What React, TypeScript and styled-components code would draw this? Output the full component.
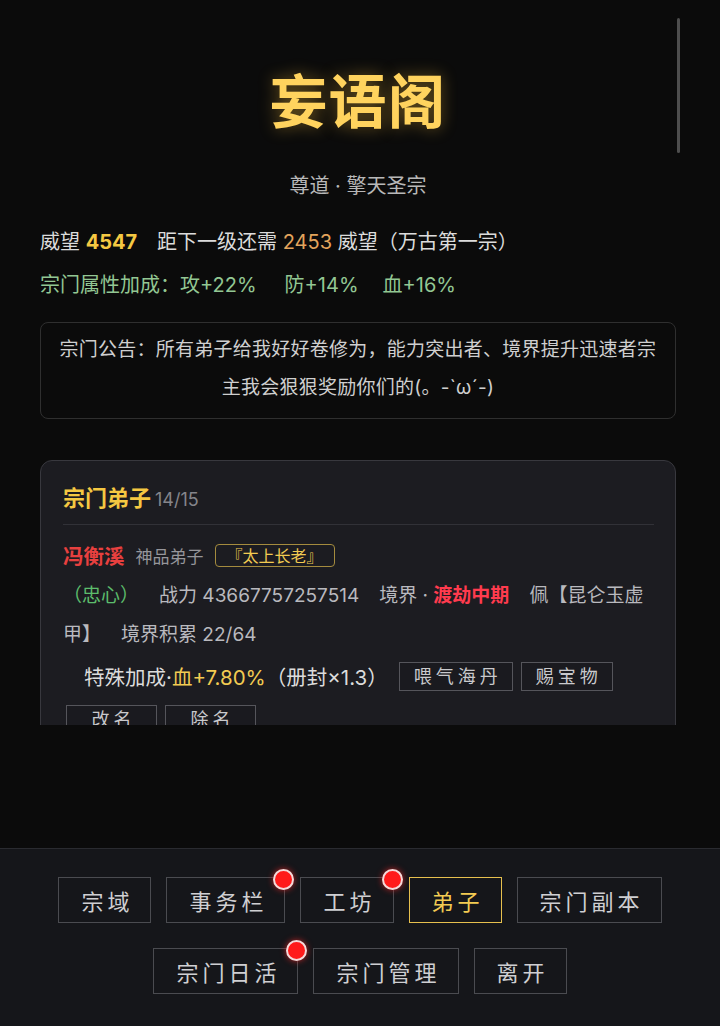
import styled, { createGlobalStyle } from "styled-components";

const GlobalStyle = createGlobalStyle`
  html, body {
    margin: 0;
    padding: 0;
    background: #0b0b0b;
  }
  body {
    font-family: Inter, "Noto Sans CJK SC", "Noto Sans", sans-serif;
    color: #d6d6d6;
  }
  * {
    box-sizing: border-box;
  }
`;

const Page = styled.div`
  display: flex;
  flex-direction: column;
  width: 720px;
  height: 1026px;
  background: #0b0b0b;
`;

const Main = styled.div`
  position: relative;
  height: 725px;
  overflow: hidden;
  padding: 63px 44px 0 40px;
`;

const ScrollThumb = styled.div`
  position: absolute;
  top: 18px;
  left: 677px;
  width: 3px;
  height: 135px;
  border-radius: 2px;
  background: #4e4e4e;
`;

const Title = styled.h1`
  margin: 0;
  text-align: center;
  font-family: "Noto Sans CJK SC", sans-serif;
  font-size: 58px;
  line-height: 70px;
  font-weight: 700;
  color: #ffd35e;
  letter-spacing: 1px;
  text-shadow: 0 0 16px rgba(255, 196, 60, 0.4);
`;

const Subtitle = styled.div`
  margin-top: 38px;
  text-align: center;
  font-size: 20px;
  line-height: 30px;
  color: #b8b8b8;
`;

const Stats = styled.div`
  margin-top: 20px;
`;

const StatLine = styled.div<{ $tone?: "green" }>`
  font-size: 20px;
  line-height: 43px;
  color: ${(p) => (p.$tone === "green" ? "#93c793" : "#dcdcdc")};
  white-space: nowrap;
`;

const Gap = styled.span<{ $w?: number }>`
  display: inline-block;
  width: ${(p) => p.$w ?? 20}px;
`;

const Gold = styled.span`
  color: #f5c842;
  font-weight: 700;
`;

const Orange = styled.span`
  color: #e3a45c;
`;

const Notice = styled.div`
  margin-top: 15px;
  border: 1px solid #2f2f2f;
  border-radius: 8px;
  padding: 8px 18px 11px;
  text-align: center;
  font-size: 19px;
  line-height: 38px;
  letter-spacing: 0.25px;
  color: #cfcfcf;
`;

const Card = styled.section`
  margin-top: 41px;
  background: #1c1c21;
  border: 1px solid #38383e;
  border-radius: 12px;
  padding: 22px 21px 30px 22px;
`;

const CardHead = styled.div`
  display: flex;
  align-items: baseline;
  gap: 4px;
  padding-bottom: 10px;
  border-bottom: 1px solid #313137;
`;

const CardTitle = styled.span`
  font-size: 22px;
  line-height: 31px;
  font-weight: 700;
  color: #f5c842;
`;

const Count = styled.span`
  font-size: 18px;
  color: #85858b;
`;

const NameRow = styled.div`
  display: flex;
  align-items: center;
  gap: 11px;
  margin-top: 15px;
  height: 30px;
`;

const Name = styled.span`
  font-size: 20.5px;
  font-weight: 700;
  color: #e8403f;
`;

const Rank = styled.span`
  font-size: 17px;
  color: #96969b;
`;

const Tag = styled.span`
  border: 1px solid #a48b3e;
  border-radius: 4px;
  padding: 0 11px;
  height: 23px;
  display: inline-flex;
  align-items: center;
  font-size: 16px;
  color: #f2cb52;
`;

const Info = styled.div`
  margin-top: 6px;
  font-size: 19px;
  line-height: 39px;
  color: #b9b9be;
`;

const Loyal = styled.span`
  color: #5dbd6c;
`;

const Strong = styled.span`
  color: #ff3b4e;
  font-weight: 700;
`;

const ActionRow = styled.div`
  display: flex;
  flex-wrap: wrap;
  align-items: center;
  column-gap: 8px;
  row-gap: 14px;
  margin-top: 7px;
  padding-left: 3px;
`;

const Bonus = styled.span`
  margin-left: 18px;
  margin-right: 3px;
  font-size: 20.5px;
  color: #dcdcdc;
`;

const Yellow = styled.span`
  color: #f2cb52;
`;

const SmallButton = styled.button`
  min-width: 91px;
  height: 29px;
  padding: 0 10px 0 14px;
  background: #1a1a1f;
  border: 1px solid #55555b;
  border-radius: 0;
  font-family: inherit;
  font-size: 18px;
  letter-spacing: 4px;
  color: #c9c9cc;
  line-height: 27px;
`;

const Spacer = styled.div`
  flex: 1;
`;

const BottomBar = styled.nav`
  height: 178px;
  background: #15161a;
  border-top: 1px solid #2a2b30;
  padding-top: 28px;
  display: flex;
  flex-direction: column;
  align-items: center;
  gap: 25px;
`;

const NavRow = styled.div`
  display: flex;
  gap: 15px;
`;

const NavButton = styled.button<{ $active?: boolean }>`
  position: relative;
  height: 46px;
  padding: 0 17px 0 22px;
  background: transparent;
  border: 1px solid ${(p) => (p.$active ? "#e6c04e" : "#4a4b50")};
  border-radius: 0;
  font-family: inherit;
  font-size: 22px;
  letter-spacing: 4px;
  color: ${(p) => (p.$active ? "#f2cb52" : "#cfcfd2")};
`;

const Dot = styled.span`
  position: absolute;
  top: -9px;
  right: -10px;
  width: 21px;
  height: 21px;
  border-radius: 50%;
  background: #ff1a1a;
  border: 2px solid #f3dada;
  box-shadow: 0 0 6px rgba(255, 40, 40, 0.7);
`;

type NavItem = { label: string; dot?: boolean; active?: boolean };

const topNav: NavItem[] = [
  { label: "宗域" },
  { label: "事务栏", dot: true },
  { label: "工坊", dot: true },
  { label: "弟子", active: true },
  { label: "宗门副本" },
];

const bottomNav: NavItem[] = [
  { label: "宗门日活", dot: true },
  { label: "宗门管理" },
  { label: "离开" },
];

const renderNav = (items: NavItem[]) =>
  items.map((n) => (
    <NavButton key={n.label} $active={n.active}>
      {n.label}
      {n.dot && <Dot />}
    </NavButton>
  ));

export default function App() {
  return (
    <Page>
      <GlobalStyle />
      <Main>
        <ScrollThumb />
        <Title>妄语阁</Title>
        <Subtitle>尊道 · 擎天圣宗</Subtitle>
        <Stats>
          <StatLine>
            威望 <Gold>4547</Gold>
            <Gap />
            距下一级还需 <Orange>2453</Orange> 威望（万古第一宗）
          </StatLine>
          <StatLine $tone="green">
            宗门属性加成：攻+22%
            <Gap $w={28} />
            防+14%
            <Gap $w={24} />
            血+16%
          </StatLine>
        </Stats>
        <Notice>
          宗门公告：所有弟子给我好好卷修为，能力突出者、境界提升迅速者宗主我会狠狠奖励你们的(。-`ω´-)
        </Notice>
        <Card>
          <CardHead>
            <CardTitle>宗门弟子</CardTitle>
            <Count>14/15</Count>
          </CardHead>
          <NameRow>
            <Name>冯衡溪</Name>
            <Rank>神品弟子</Rank>
            <Tag>『太上长老』</Tag>
          </NameRow>
          <Info>
            <Loyal>（忠心）</Loyal>
            <Gap />
            <span>战力 43667757257514</span>
            <Gap />
            <span>
              境界 · <Strong>渡劫中期</Strong>
            </span>
            <Gap />
            <span>佩【昆仑玉虚</span>
            <span>甲】</span>
            <Gap />
            <span>境界积累 22/64</span>
          </Info>
          <ActionRow>
            <Bonus>
              特殊加成·<Yellow>血+7.80%</Yellow>（册封×1.3）
            </Bonus>
            <SmallButton>喂气海丹</SmallButton>
            <SmallButton>赐宝物</SmallButton>
            <SmallButton>改名</SmallButton>
            <SmallButton>除名</SmallButton>
          </ActionRow>
        </Card>
      </Main>
      <Spacer />
      <BottomBar>
        <NavRow>{renderNav(topNav)}</NavRow>
        <NavRow>{renderNav(bottomNav)}</NavRow>
      </BottomBar>
    </Page>
  );
}
